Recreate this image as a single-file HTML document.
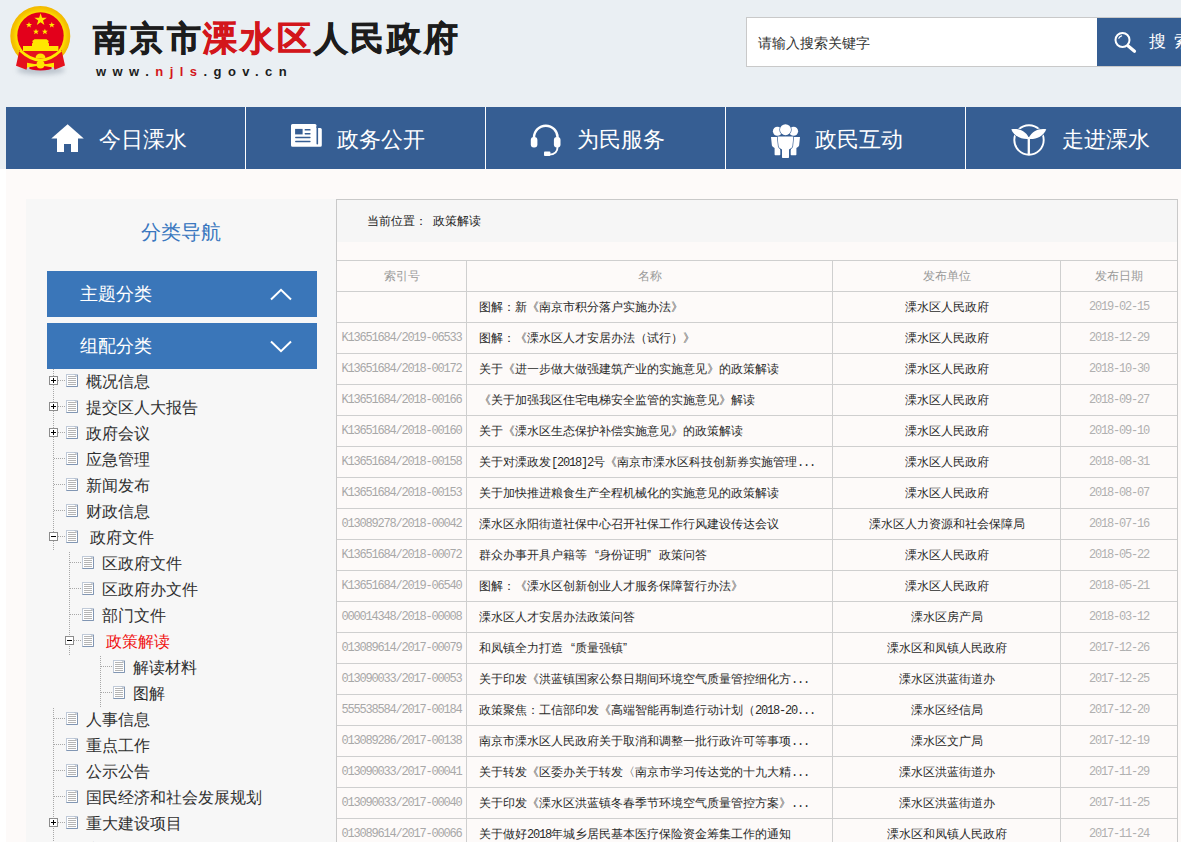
<!DOCTYPE html>
<html><head><meta charset="utf-8">
<style>
*{margin:0;padding:0;box-sizing:border-box}
html,body{width:1181px;height:842px;overflow:hidden}
body{position:relative;background:#fff;font-family:"Liberation Sans",sans-serif;color:#222}
.abs{position:absolute}
#hdr{left:0;top:0;width:1181px;height:169px;background:#eaeff3}
#body{left:6px;top:169px;width:1175px;height:673px;background:#fdfaf9}
#title{left:93px;top:14px;font-size:34px;font-weight:bold;-webkit-text-stroke:0.7px currentColor;color:#1c1c1c;letter-spacing:2.75px;white-space:nowrap;line-height:48px}
#title span{color:#d3161b}
#url{left:96px;top:62px;font-size:13px;font-weight:bold;color:#1c1c1c;letter-spacing:6.45px;white-space:nowrap;line-height:20px}
#url span{color:#d3161b}
#search{left:746px;top:17px;width:352px;height:50px;border:1px solid #c9c9c9;background:#fff}
#search .ph{position:absolute;left:11px;top:16px;font-size:14px;color:#333;line-height:18px;white-space:nowrap}
#sbtn{left:1097px;top:18px;width:100px;height:48px;background:#355e93}
#sbtn .t{position:absolute;left:52px;top:12px;font-size:17px;color:#fff;letter-spacing:8px;white-space:nowrap;line-height:24px}
#nav{left:6px;top:107px;width:1200px;height:62px;background:#365e93}
.ni{position:absolute;top:0;height:62px;width:240px;border-right:1px solid #fff}
.ni .t{position:absolute;top:19px;font-size:22px;color:#fff;line-height:28px;white-space:nowrap}
.ni svg{position:absolute}
#side{left:26px;top:199px;width:310px;height:643px;background:#f7f7f7}
#sidetitle{left:141px;top:218px;font-size:20px;font-weight:500;color:#3a77bf;line-height:28px;font-family:"Liberation Serif",serif;white-space:nowrap}
.sbtn2{position:absolute;left:47px;width:270px;height:46px;background:#3a76b9}
.sbtn2 .t{position:absolute;left:33px;top:10px;font-size:18px;color:#fff;line-height:26px;font-family:"Liberation Serif",serif;white-space:nowrap}
.sbtn2 svg{position:absolute;left:224px;top:18px}
#content{left:336px;top:199px;width:842px;height:643px;border-left:1px solid #c9c9c9;border-top:1px solid #c9c9c9;border-right:1px solid #c9c9c9}
#crumb{left:337px;top:200px;width:840px;height:42px;background:#f6f6f6}
#crumb .t{position:absolute;left:30px;top:13px;font-size:12px;color:#222;line-height:16px;white-space:nowrap}

.vd{position:absolute;width:1px;background:repeating-linear-gradient(to bottom,#a8a8a8 0 1px,transparent 1px 2px)}
.hd{position:absolute;height:1px;background:repeating-linear-gradient(to right,#a8a8a8 0 1px,transparent 1px 2px)}
.bx{position:absolute;width:9px;height:9px;border:1px solid #8c8c8c;background:#fff}
.bx .ph{position:absolute;left:1px;top:3px;width:5px;height:1px;background:#000}
.bx .pv{position:absolute;left:3px;top:1px;width:1px;height:5px;background:#000}
.doc{position:absolute}
.tt{position:absolute;font-size:16px;line-height:22px;color:#303030;white-space:nowrap}
.tt.red{color:#f01010}
.hl{position:absolute;left:337px;width:840px;height:1px;background:#cfcfcf}
.vl{position:absolute;top:260px;width:1px;height:582px;background:#cfcfcf}
.c{position:absolute;height:30px;line-height:30px;font-size:12px;white-space:nowrap}
.c.hdr{text-align:center;color:#9a9a9a}
.c.idx{text-align:center;color:#a8a8a8;font-family:"Liberation Mono",monospace;letter-spacing:-1.2px}
.c.nm{padding-left:12px;color:#2a2a2a}
.mo{font-family:"Liberation Mono",monospace;letter-spacing:-1.2px}
.qq{display:inline-block;width:12px;text-align:center}
.c.un{text-align:center;color:#2a2a2a}
.c.dt{text-align:center;color:#b0b0b0;font-family:"Liberation Mono",monospace;letter-spacing:-1.2px}
</style></head><body>
<div id="hdr" class="abs"></div>
<div id="body" class="abs"></div>

<!-- emblem -->
<svg class="abs" style="left:0;top:0" width="90" height="90" viewBox="0 0 90 90">
<defs><filter id="bl" x="-50%" y="-50%" width="200%" height="200%"><feGaussianBlur stdDeviation="2.6"/></filter>
<radialGradient id="rg" cx="50%" cy="50%" r="50%"><stop offset=".76" stop-color="#ffe600"/><stop offset=".9" stop-color="#f6c400"/><stop offset="1" stop-color="#f2b800"/></radialGradient></defs>
<ellipse cx="41" cy="70" rx="24" ry="4.5" fill="#a7b1bc" opacity=".7" filter="url(#bl)"/>
<circle cx="40.3" cy="36" r="30" fill="url(#rg)"/>
<circle cx="40.5" cy="35.5" r="23.2" fill="#e3001b"/>
<path d="M19.5 50 L16 65.8 L26.5 69.7 L28 64 L53 64 L54.5 69.7 L65 65.5 L61.5 50 Z" fill="#e5121d"/>

<path d="M23 46 H58.4 V51 H23 Z M32 46 V43.5 L33 42.5 L32.2 41 L34.5 39.3 H46.5 L48.8 41 L48 42.5 L49 43.5 V46 Z" fill="#ffe600"/>
<path d="M35.5 58.4 A5 5 0 0 1 45.5 58.4 Z" fill="#ffe600"/>
<path d="M20 50.3 Q40.5 70 61 50.3" fill="none" stroke="#ffe800" stroke-width="2.8"/>
<ellipse cx="40.5" cy="68" rx="11.5" ry="2.6" fill="#e3001b"/>
<path d="M27 62.8 L37 64.6 L37 66 L27 67.5 Z M54 62.8 L44 64.6 L44 66 L54 67.5 Z" fill="#ffe600"/>
<circle cx="40.5" cy="64.4" r="4" fill="#ffe600"/>
<g fill="#ffe600">
<path d="M40.6 13.2 L42.1 17.7 L46.8 17.7 L43 20.5 L44.4 25 L40.6 22.2 L36.8 25 L38.2 20.5 L34.4 17.7 L39.1 17.7 Z"/>
<path d="M29 22 L29.8 24 L32 24.1 L30.3 25.4 L30.9 27.5 L29 26.3 L27.1 27.5 L27.7 25.4 L26 24.1 L28.2 24 Z"/>
<path d="M51.8 22 L52.6 24 L54.8 24.1 L53.1 25.4 L53.7 27.5 L51.8 26.3 L49.9 27.5 L50.5 25.4 L48.8 24.1 L51 24 Z"/>
<path d="M36 28.7 L36.8 30.7 L39 30.8 L37.3 32.1 L37.9 34.2 L36 33 L34.1 34.2 L34.7 32.1 L33 30.8 L35.2 30.7 Z"/>
<path d="M44.9 28.7 L45.7 30.7 L47.9 30.8 L46.2 32.1 L46.8 34.2 L44.9 33 L43 34.2 L43.6 32.1 L41.9 30.8 L44.1 30.7 Z"/>
</g>
</svg>

<div id="title" class="abs">南京市<span>溧水区</span>人民政府</div>
<div id="url" class="abs">www.<span>njls</span>.gov.cn</div>

<div id="search" class="abs"><div class="ph">请输入搜索关键字</div></div>
<div class="abs" style="left:1097px;top:17px;width:84px;height:1px;background:#c9c9c9"></div><div class="abs" style="left:1097px;top:66px;width:84px;height:1px;background:#c9c9c9"></div>
<div id="sbtn" class="abs">
  <svg style="position:absolute;left:14px;top:12px" width="26" height="26" viewBox="0 0 26 26">
   <circle cx="11.5" cy="10" r="7" fill="none" stroke="#fff" stroke-width="2"/>
   <path d="M7.8 8.2 A4.2 4.2 0 0 1 10.6 5.9" fill="none" stroke="#fff" stroke-width="1.2" stroke-linecap="round"/>
   <path d="M17.2 16 L23.5 21.3" stroke="#fff" stroke-width="3.2" stroke-linecap="round"/>
  </svg>
  <div class="t">搜索</div>
</div>

<div id="nav" class="abs">
  <div class="ni" style="left:0"><svg style="left:45px;top:16px" width="34" height="30" viewBox="0 0 34 30"><path d="M0.3 15.4 L16.6 1.2 L32.8 15.4 Z" fill="#fff"/><path d="M6 14 H27 V29 H20 V20.9 H13 V29 H6 Z" fill="#fff"/></svg><div class="t" style="left:93px">今日溧水</div></div>
  <div class="ni" style="left:240px"><svg style="left:45px;top:17px" width="32" height="24" viewBox="0 0 32 24"><path d="M1.5 0 H24 Q25.5 0 25.5 1.5 V3.9 H29.3 Q30.8 3.9 30.8 5.4 V21.3 Q30.8 22.8 29.3 22.8 H1.5 Q0 22.8 0 21.3 V1.5 Q0 0 1.5 0 Z" fill="#fff"/><rect x="25.5" y="2" width="1.6" height="18.6" rx="0.8" fill="#365e93"/><rect x="4.1" y="4.9" width="7.5" height="5.5" fill="#365e93"/><rect x="13.6" y="5.1" width="6" height="1.4" rx=".6" fill="#365e93"/><rect x="13.6" y="9" width="6" height="1.4" rx=".6" fill="#365e93"/><rect x="4.1" y="12.7" width="15.5" height="1.5" rx=".6" fill="#365e93"/><rect x="4.1" y="16.7" width="15.5" height="1.5" rx=".6" fill="#365e93"/></svg><div class="t" style="left:91px">政务公开</div></div>
  <div class="ni" style="left:480px"><svg style="left:44px;top:16px" width="32" height="34" viewBox="0 0 32 34"><path d="M4 19 V14.5 A11.8 11.8 0 0 1 27.6 14.5 V19" fill="none" stroke="#fff" stroke-width="2.4"/><rect x="0.8" y="14" width="6.6" height="10.4" rx="3" fill="#fff"/><rect x="23.9" y="14" width="6.6" height="10.4" rx="3" fill="#fff"/><path d="M27.6 23.5 Q27.6 31.6 19 31.6" fill="none" stroke="#fff" stroke-width="1.9"/><rect x="14" y="28.6" width="6.4" height="4.4" rx="0.9" fill="#fff"/></svg><div class="t" style="left:91px">为民服务</div></div>
  <div class="ni" style="left:720px"><svg style="left:45px;top:16px" width="30" height="36" viewBox="0 0 30 36"><g fill="#fff"><circle cx="6.4" cy="8.2" r="4.5"/><circle cx="22.6" cy="8.2" r="4.5"/><path d="M0 14.1 H9 V26 L9.3 27.5 V31.5 Q9.3 32.2 8.6 32.2 H4.3 Q3.6 32.2 3.6 31.5 V25 Q1.2 23.8 0.9 22.5 Z"/><path d="M29 14.1 H20 V26 L19.7 27.5 V31.5 Q19.7 32.2 20.4 32.2 H24.7 Q25.4 32.2 25.4 31.5 V25 Q27.8 23.8 28.1 22.5 Z"/></g><g fill="#fff" stroke="#365e93" stroke-width="1.3" paint-order="stroke"><circle cx="14.5" cy="6.7" r="5.5"/><path d="M6.6 13.6 H22.3 L21.4 23.6 Q21 25 18 26.5 V34.3 Q18 35 17.3 35 H11.7 Q11 35 11 34.3 V26.5 Q8 25 7.6 23.6 Z"/></g></svg><div class="t" style="left:89px">政民互动</div></div>
  <div class="ni" style="left:960px"><svg style="left:41px;top:15px" width="40" height="34" viewBox="0 0 40 34"><circle cx="22" cy="18" r="14.7" fill="none" stroke="#fff" stroke-width="1.9"/><path d="M21.8 16 V32.5" stroke="#fff" stroke-width="2.3"/><g fill="#fff" stroke="#365e93" stroke-width="1.3" paint-order="stroke"><path d="M4.3 7.2 C12 6, 18.5 9, 21.8 15.6 L21.8 17 C15 17.6, 7 14.5, 4.3 7.2 Z"/><path d="M39.3 7.2 C31.6 6, 25.1 9, 21.8 15.6 L21.8 17 C28.6 17.6, 36.6 14.5, 39.3 7.2 Z"/></g><path d="M21.8 15 V18" stroke="#fff" stroke-width="2.3"/></svg><div class="t" style="left:96px">走进溧水</div></div>
</div>

<div id="side" class="abs"></div>
<div id="sidetitle" class="abs">分类导航</div>
<div class="sbtn2" style="top:271px"><div class="t">主题分类</div><svg style="position:absolute;left:223px;top:17px" width="22" height="13" viewBox="0 0 22 13"><path d="M1 11.5 L11 1.8 L21 11.5" fill="none" stroke="#fff" stroke-width="2"/></svg></div>
<div class="sbtn2" style="top:323px"><div class="t">组配分类</div><svg style="position:absolute;left:223px;top:17px" width="22" height="13" viewBox="0 0 22 13"><path d="M1 1.5 L11 11.2 L21 1.5" fill="none" stroke="#fff" stroke-width="2"/></svg></div>

<div id="content" class="abs"></div>
<div id="crumb" class="abs"><div class="t">当前位置：<span style="margin-left:6px">政策解读</span></div></div>

<svg width="0" height="0" style="position:absolute"><defs><symbol id="docic" viewBox="0 0 12 13">
<rect x="0.5" y="0.5" width="11" height="12" fill="#fff" stroke="#c0cad8"/>
<path d="M11.5 1 V12.5 H0.5" fill="none" stroke="#8196b3"/>
<path d="M9 0.5 L11.5 3" stroke="#9aa6b8" fill="none"/>
<g fill="#b4b4b4"><rect x="2" y="2" width="8" height="1"/><rect x="2" y="4" width="8" height="1"/><rect x="2" y="6" width="8" height="1"/><rect x="2" y="8" width="8" height="1"/><rect x="2" y="10" width="8" height="1"/></g>
</symbol></defs></svg>
<div class="vd" style="left:53px;top:369px;height:182px"></div>
<div class="vd" style="left:53px;top:708px;height:134px"></div>
<div class="vd" style="left:69px;top:552px;height:103px"></div>
<div class="vd" style="left:100px;top:656px;height:51px"></div>
<div class="hd" style="left:58px;top:380px;width:7px"></div>
<div class="bx" style="left:49px;top:376px"><i class="ph"></i><i class="pv"></i></div>
<svg class="doc" style="left:66px;top:374px" width="12" height="13"><use href="#docic"/></svg>
<div class="tt" style="left:86px;top:371px">概况信息</div>
<div class="hd" style="left:58px;top:406px;width:7px"></div>
<div class="bx" style="left:49px;top:402px"><i class="ph"></i><i class="pv"></i></div>
<svg class="doc" style="left:66px;top:400px" width="12" height="13"><use href="#docic"/></svg>
<div class="tt" style="left:86px;top:397px">提交区人大报告</div>
<div class="hd" style="left:58px;top:432px;width:7px"></div>
<div class="bx" style="left:49px;top:428px"><i class="ph"></i><i class="pv"></i></div>
<svg class="doc" style="left:66px;top:426px" width="12" height="13"><use href="#docic"/></svg>
<div class="tt" style="left:86px;top:423px">政府会议</div>
<div class="hd" style="left:54px;top:458px;width:11px"></div>
<svg class="doc" style="left:66px;top:452px" width="12" height="13"><use href="#docic"/></svg>
<div class="tt" style="left:86px;top:449px">应急管理</div>
<div class="hd" style="left:54px;top:484px;width:11px"></div>
<svg class="doc" style="left:66px;top:478px" width="12" height="13"><use href="#docic"/></svg>
<div class="tt" style="left:86px;top:475px">新闻发布</div>
<div class="hd" style="left:54px;top:510px;width:11px"></div>
<svg class="doc" style="left:66px;top:504px" width="12" height="13"><use href="#docic"/></svg>
<div class="tt" style="left:86px;top:501px">财政信息</div>
<div class="hd" style="left:58px;top:536px;width:7px"></div>
<div class="bx" style="left:49px;top:532px"><i class="ph"></i></div>
<svg class="doc" style="left:66px;top:530px" width="12" height="13"><use href="#docic"/></svg>
<div class="tt" style="left:90px;top:527px">政府文件</div>
<div class="hd" style="left:70px;top:562px;width:11px"></div>
<svg class="doc" style="left:82px;top:556px" width="12" height="13"><use href="#docic"/></svg>
<div class="tt" style="left:102px;top:553px">区政府文件</div>
<div class="hd" style="left:70px;top:588px;width:11px"></div>
<svg class="doc" style="left:82px;top:582px" width="12" height="13"><use href="#docic"/></svg>
<div class="tt" style="left:102px;top:579px">区政府办文件</div>
<div class="hd" style="left:70px;top:614px;width:11px"></div>
<svg class="doc" style="left:82px;top:608px" width="12" height="13"><use href="#docic"/></svg>
<div class="tt" style="left:102px;top:605px">部门文件</div>
<div class="hd" style="left:74px;top:640px;width:7px"></div>
<div class="bx" style="left:65px;top:636px"><i class="ph"></i></div>
<svg class="doc" style="left:82px;top:634px" width="12" height="13"><use href="#docic"/></svg>
<div class="tt red" style="left:106px;top:631px">政策解读</div>
<div class="hd" style="left:101px;top:666px;width:11px"></div>
<svg class="doc" style="left:113px;top:660px" width="12" height="13"><use href="#docic"/></svg>
<div class="tt" style="left:133px;top:657px">解读材料</div>
<div class="hd" style="left:101px;top:692px;width:11px"></div>
<svg class="doc" style="left:113px;top:686px" width="12" height="13"><use href="#docic"/></svg>
<div class="tt" style="left:133px;top:683px">图解</div>
<div class="hd" style="left:54px;top:718px;width:11px"></div>
<svg class="doc" style="left:66px;top:712px" width="12" height="13"><use href="#docic"/></svg>
<div class="tt" style="left:86px;top:709px">人事信息</div>
<div class="hd" style="left:54px;top:744px;width:11px"></div>
<svg class="doc" style="left:66px;top:738px" width="12" height="13"><use href="#docic"/></svg>
<div class="tt" style="left:86px;top:735px">重点工作</div>
<div class="hd" style="left:54px;top:770px;width:11px"></div>
<svg class="doc" style="left:66px;top:764px" width="12" height="13"><use href="#docic"/></svg>
<div class="tt" style="left:86px;top:761px">公示公告</div>
<div class="hd" style="left:54px;top:796px;width:11px"></div>
<svg class="doc" style="left:66px;top:790px" width="12" height="13"><use href="#docic"/></svg>
<div class="tt" style="left:86px;top:787px">国民经济和社会发展规划</div>
<div class="hd" style="left:58px;top:822px;width:7px"></div>
<div class="bx" style="left:49px;top:818px"><i class="ph"></i><i class="pv"></i></div>
<svg class="doc" style="left:66px;top:816px" width="12" height="13"><use href="#docic"/></svg>
<div class="tt" style="left:86px;top:813px">重大建设项目</div>
<div class="hd" style="left:54px;top:848px;width:11px"></div>
<svg class="doc" style="left:66px;top:842px" width="12" height="13"><use href="#docic"/></svg>
<div class="tt" style="left:86px;top:839px">专项资金</div>
<div class="hl" style="top:260px"></div>
<div class="hl" style="top:291px"></div>
<div class="hl" style="top:322px"></div>
<div class="hl" style="top:353px"></div>
<div class="hl" style="top:384px"></div>
<div class="hl" style="top:415px"></div>
<div class="hl" style="top:446px"></div>
<div class="hl" style="top:477px"></div>
<div class="hl" style="top:508px"></div>
<div class="hl" style="top:539px"></div>
<div class="hl" style="top:570px"></div>
<div class="hl" style="top:601px"></div>
<div class="hl" style="top:632px"></div>
<div class="hl" style="top:663px"></div>
<div class="hl" style="top:694px"></div>
<div class="hl" style="top:725px"></div>
<div class="hl" style="top:756px"></div>
<div class="hl" style="top:787px"></div>
<div class="hl" style="top:818px"></div>
<div class="hl" style="top:849px"></div>
<div class="vl" style="left:466px"></div>
<div class="vl" style="left:832px"></div>
<div class="vl" style="left:1060px"></div>
<div class="c hdr" style="left:337px;top:261px;width:129px">索引号</div>
<div class="c hdr" style="left:467px;top:261px;width:365px">名称</div>
<div class="c hdr" style="left:833px;top:261px;width:227px">发布单位</div>
<div class="c hdr" style="left:1061px;top:261px;width:116px">发布日期</div>
<div class="c idx" style="left:337px;top:292px;width:129px"></div>
<div class="c nm" style="left:467px;top:292px;width:365px">图解：新《南京市积分落户实施办法》</div>
<div class="c un" style="left:833px;top:292px;width:227px">溧水区人民政府</div>
<div class="c dt" style="left:1061px;top:292px;width:116px">2019-02-15</div>
<div class="c idx" style="left:337px;top:323px;width:129px">K13651684/2019-06533</div>
<div class="c nm" style="left:467px;top:323px;width:365px">图解：《溧水区人才安居办法（试行）》</div>
<div class="c un" style="left:833px;top:323px;width:227px">溧水区人民政府</div>
<div class="c dt" style="left:1061px;top:323px;width:116px">2018-12-29</div>
<div class="c idx" style="left:337px;top:354px;width:129px">K13651684/2018-00172</div>
<div class="c nm" style="left:467px;top:354px;width:365px">关于《进一步做大做强建筑产业的实施意见》的政策解读</div>
<div class="c un" style="left:833px;top:354px;width:227px">溧水区人民政府</div>
<div class="c dt" style="left:1061px;top:354px;width:116px">2018-10-30</div>
<div class="c idx" style="left:337px;top:385px;width:129px">K13651684/2018-00166</div>
<div class="c nm" style="left:467px;top:385px;width:365px">《关于加强我区住宅电梯安全监管的实施意见》解读</div>
<div class="c un" style="left:833px;top:385px;width:227px">溧水区人民政府</div>
<div class="c dt" style="left:1061px;top:385px;width:116px">2018-09-27</div>
<div class="c idx" style="left:337px;top:416px;width:129px">K13651684/2018-00160</div>
<div class="c nm" style="left:467px;top:416px;width:365px">关于《溧水区生态保护补偿实施意见》的政策解读</div>
<div class="c un" style="left:833px;top:416px;width:227px">溧水区人民政府</div>
<div class="c dt" style="left:1061px;top:416px;width:116px">2018-09-10</div>
<div class="c idx" style="left:337px;top:447px;width:129px">K13651684/2018-00158</div>
<div class="c nm" style="left:467px;top:447px;width:365px">关于对溧政发<span class="mo">[2018]2</span>号《南京市溧水区科技创新券实施管理<span class="mo">...</span></div>
<div class="c un" style="left:833px;top:447px;width:227px">溧水区人民政府</div>
<div class="c dt" style="left:1061px;top:447px;width:116px">2018-08-31</div>
<div class="c idx" style="left:337px;top:478px;width:129px">K13651684/2018-00153</div>
<div class="c nm" style="left:467px;top:478px;width:365px">关于加快推进粮食生产全程机械化的实施意见的政策解读</div>
<div class="c un" style="left:833px;top:478px;width:227px">溧水区人民政府</div>
<div class="c dt" style="left:1061px;top:478px;width:116px">2018-08-07</div>
<div class="c idx" style="left:337px;top:509px;width:129px">013089278/2018-00042</div>
<div class="c nm" style="left:467px;top:509px;width:365px">溧水区永阳街道社保中心召开社保工作行风建设传达会议</div>
<div class="c un" style="left:833px;top:509px;width:227px">溧水区人力资源和社会保障局</div>
<div class="c dt" style="left:1061px;top:509px;width:116px">2018-07-16</div>
<div class="c idx" style="left:337px;top:540px;width:129px">K13651684/2018-00072</div>
<div class="c nm" style="left:467px;top:540px;width:365px">群众办事开具户籍等<span class="qq" style="text-align:right">“</span>身份证明<span class="qq" style="text-align:left">”</span>政策问答</div>
<div class="c un" style="left:833px;top:540px;width:227px">溧水区人民政府</div>
<div class="c dt" style="left:1061px;top:540px;width:116px">2018-05-22</div>
<div class="c idx" style="left:337px;top:571px;width:129px">K13651684/2019-06540</div>
<div class="c nm" style="left:467px;top:571px;width:365px">图解：《溧水区创新创业人才服务保障暂行办法》</div>
<div class="c un" style="left:833px;top:571px;width:227px">溧水区人民政府</div>
<div class="c dt" style="left:1061px;top:571px;width:116px">2018-05-21</div>
<div class="c idx" style="left:337px;top:602px;width:129px">000014348/2018-00008</div>
<div class="c nm" style="left:467px;top:602px;width:365px">溧水区人才安居办法政策问答</div>
<div class="c un" style="left:833px;top:602px;width:227px">溧水区房产局</div>
<div class="c dt" style="left:1061px;top:602px;width:116px">2018-03-12</div>
<div class="c idx" style="left:337px;top:633px;width:129px">013089614/2017-00079</div>
<div class="c nm" style="left:467px;top:633px;width:365px">和凤镇全力打造<span class="qq" style="text-align:right">“</span>质量强镇<span class="qq" style="text-align:left">”</span></div>
<div class="c un" style="left:833px;top:633px;width:227px">溧水区和凤镇人民政府</div>
<div class="c dt" style="left:1061px;top:633px;width:116px">2017-12-26</div>
<div class="c idx" style="left:337px;top:664px;width:129px">013090033/2017-00053</div>
<div class="c nm" style="left:467px;top:664px;width:365px">关于印发《洪蓝镇国家公祭日期间环境空气质量管控细化方<span class="mo">...</span></div>
<div class="c un" style="left:833px;top:664px;width:227px">溧水区洪蓝街道办</div>
<div class="c dt" style="left:1061px;top:664px;width:116px">2017-12-25</div>
<div class="c idx" style="left:337px;top:695px;width:129px">555538584/2017-00184</div>
<div class="c nm" style="left:467px;top:695px;width:365px">政策聚焦：工信部印发《高端智能再制造行动计划（<span class="mo">2018-20...</span></div>
<div class="c un" style="left:833px;top:695px;width:227px">溧水区经信局</div>
<div class="c dt" style="left:1061px;top:695px;width:116px">2017-12-20</div>
<div class="c idx" style="left:337px;top:726px;width:129px">013089286/2017-00138</div>
<div class="c nm" style="left:467px;top:726px;width:365px">南京市溧水区人民政府关于取消和调整一批行政许可等事项<span class="mo">...</span></div>
<div class="c un" style="left:833px;top:726px;width:227px">溧水区文广局</div>
<div class="c dt" style="left:1061px;top:726px;width:116px">2017-12-19</div>
<div class="c idx" style="left:337px;top:757px;width:129px">013090033/2017-00041</div>
<div class="c nm" style="left:467px;top:757px;width:365px">关于转发《区委办关于转发〈南京市学习传达党的十九大精<span class="mo">...</span></div>
<div class="c un" style="left:833px;top:757px;width:227px">溧水区洪蓝街道办</div>
<div class="c dt" style="left:1061px;top:757px;width:116px">2017-11-29</div>
<div class="c idx" style="left:337px;top:788px;width:129px">013090033/2017-00040</div>
<div class="c nm" style="left:467px;top:788px;width:365px">关于印发《溧水区洪蓝镇冬春季节环境空气质量管控方案》<span class="mo">...</span></div>
<div class="c un" style="left:833px;top:788px;width:227px">溧水区洪蓝街道办</div>
<div class="c dt" style="left:1061px;top:788px;width:116px">2017-11-25</div>
<div class="c idx" style="left:337px;top:819px;width:129px">013089614/2017-00066</div>
<div class="c nm" style="left:467px;top:819px;width:365px">关于做好<span class="mo">2018</span>年城乡居民基本医疗保险资金筹集工作的通知</div>
<div class="c un" style="left:833px;top:819px;width:227px">溧水区和凤镇人民政府</div>
<div class="c dt" style="left:1061px;top:819px;width:116px">2017-11-24</div>
</body></html>
